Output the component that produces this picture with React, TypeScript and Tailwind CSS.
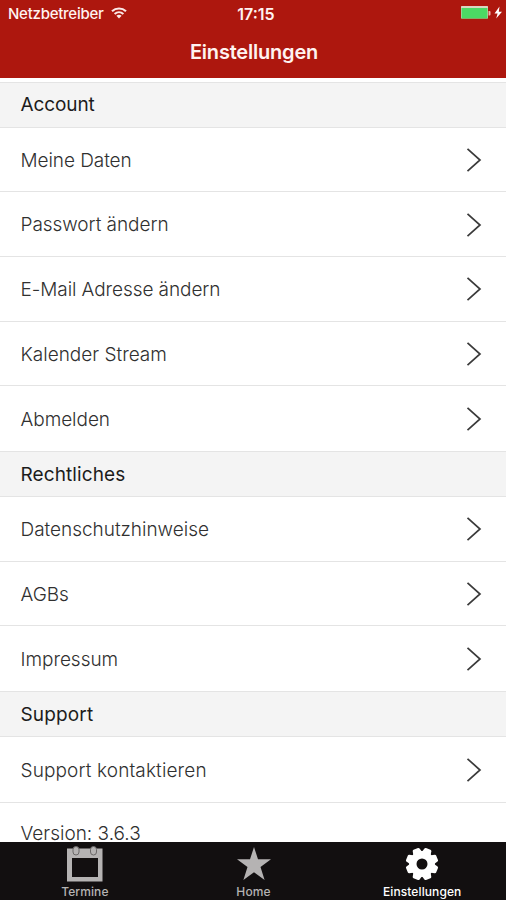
import type { ReactNode } from 'react';

interface Row {
  label: string;
  tracking: string;
}

interface Section {
  title: string;
  tracking: string;
  rows: Row[];
}

const SECTIONS: Section[] = [
  {
    title: 'Account',
    tracking: 'tracking-[-0.1px]',
    rows: [
      { label: 'Meine Daten', tracking: 'tracking-[-0.07px]' },
      { label: 'Passwort ändern', tracking: 'tracking-[-0.05px]' },
      { label: 'E-Mail Adresse ändern', tracking: 'tracking-[-0.08px]' },
      { label: 'Kalender Stream', tracking: 'tracking-[0px]' },
      { label: 'Abmelden', tracking: 'tracking-[-0.05px]' },
    ],
  },
  {
    title: 'Rechtliches',
    tracking: 'tracking-[0.1px]',
    rows: [
      { label: 'Datenschutzhinweise', tracking: 'tracking-[-0.02px]' },
      { label: 'AGBs', tracking: 'tracking-[-0.1px]' },
      { label: 'Impressum', tracking: 'tracking-[-0.03px]' },
    ],
  },
  {
    title: 'Support',
    tracking: 'tracking-[0.15px]',
    rows: [{ label: 'Support kontaktieren', tracking: 'tracking-[0.13px]' }],
  },
];

const GEAR_TEETH = [22.5, 67.5, 112.5, 157.5, 202.5, 247.5, 292.5, 337.5];

function WifiIcon() {
  return (
    <svg width="16" height="12" viewBox="0 0 16 12" fill="none" stroke="#fbe9e7" className="mb-[2px] ml-[7px]">
      <path d="M1 4.2C5 .6 11 .6 15 4.2" strokeWidth="2.2" />
      <path d="M3.6 7C6.2 4.7 9.8 4.7 12.4 7" strokeWidth="2" />
      <path d="M5.4 8.8C7 7.4 9 7.4 10.6 8.800L8 11.6Z" fill="#fbe9e7" stroke="none" />
    </svg>
  );
}

function BatteryIcon() {
  return (
    <svg width="42" height="15" viewBox="0 0 42 15">
      <rect x="0" y="0" width="27" height="12.5" rx="0.5" fill="#d9d5c0" />
      <rect x="0.500" y="2" width="26" height="10.500" fill="#4cd964" />
      <path d="M27.500 5H28.500Q29.500 5 29.500 6V8.500Q29.500 9.500 28.500 9.500H27.500Z" fill="#f0b5ae" />
      <path d="M38.500 0.500L33.500 7.500H36.600L35.200 12.600L41 5.700H37.800Z" fill="#fff" />
    </svg>
  );
}

function Chevron() {
  return (
    <svg width="16" height="26" viewBox="0 0 16 26" fill="none" stroke="#3a3a3a" strokeWidth="1.7" className="mt-[1px] mr-[24px]">
      <path d="M1.500 1.800L14 13L1.500 24.200" />
    </svg>
  );
}

function CalendarIcon() {
  return (
    <svg width="36" height="36" viewBox="0 0 36 36" className="ml-[1px]">
      <path d="M0 2.500H35.500V35.500H0ZM5 12V31H31V12Z" fill="#b5b3b3" fillRule="evenodd" />
      <rect x="6" y="0.500" width="6" height="8.500" rx="3" fill="#b5b3b3" stroke="#6b6868" strokeWidth="1" />
      <rect x="23.500" y="0.500" width="6" height="8.500" rx="3" fill="#b5b3b3" stroke="#6b6868" strokeWidth="1" />
    </svg>
  );
}

function StarIcon() {
  return (
    <svg width="36" height="36" viewBox="0 0 36 36" className="ml-[1px]">
      <path d="M18 1L22 13.300H35L24.500 21L28.600 34L18 26.200L7.400 34L11.500 21L1 13.300H14Z" fill="#b5b3b3" />
    </svg>
  );
}

function GearIcon() {
  return (
    <svg width="36" height="36" viewBox="0 0 36 36" className="ml-[1px]">
      {GEAR_TEETH.map((angle) => (
        <path
          key={angle}
          d="M13 8L14.300 2.700Q14.600 1.700 15.600 1.700H20.400Q21.400 1.700 21.700 2.700L23 8Z"
          fill="#fff"
          transform={`rotate(${angle} 18 18)`}
        />
      ))}
      <circle cx="18" cy="18" r="9.200" fill="none" stroke="#fff" strokeWidth="7.400" />
    </svg>
  );
}

function Tab({ icon, label, className }: { icon: ReactNode; label: string; className: string }) {
  return (
    <div className={`flex flex-1 flex-col items-center pt-1 ${className}`}>
      {icon}
      <span className="mt-[2px] ml-[1px] text-[12px] leading-[16px] font-medium tracking-[0.1px]">{label}</span>
    </div>
  );
}

export default function App() {
  return (
    <div className="flex h-[900px] w-[506px] flex-col overflow-hidden bg-white font-['Inter',sans-serif] text-[#1c1c1c]">
      <header className="h-[78px] shrink-0 bg-[#ad170e] text-[#fff3f1]">
        <div className="grid h-[27px] grid-cols-3 items-center leading-[20px]">
          <div className="flex items-center pl-[8px]">
            <span className="text-[15px] font-medium tracking-[-0.25px]">Netzbetreiber</span>
            <WifiIcon />
          </div>
          <span className="pl-[6px] text-center text-[16px] font-semibold">17:15</span>
          <div className="flex justify-end pr-[3px]">
            <BatteryIcon />
          </div>
        </div>
        <h1 className="mt-[11px] pl-[2px] text-center text-[20px] leading-[28px] font-semibold tracking-[-0.2px]">
          Einstellungen
        </h1>
      </header>

      <main className="min-h-0 flex-1 overflow-hidden pt-[3.5px]">
        {SECTIONS.map((section) => (
          <section key={section.title}>
            <h2
              className={`flex h-[46px] items-center border-y border-[#e4e4e4] bg-[#f4f4f4] pt-[2px] pl-[20.5px] text-[19px] ${section.tracking}`}
            >
              {section.title}
            </h2>
            {section.rows.map((row) => (
              <div
                key={row.label}
                className="flex h-[64.7px] items-center justify-between border-b border-[#e4e4e4] pl-[20.5px] last:border-b-0"
              >
                <span className={`pt-[3px] text-[19px] font-light text-[#303030] ${row.tracking}`}>{row.label}</span>
                <Chevron />
              </div>
            ))}
          </section>
        ))}
        <div className="flex h-[64.7px] items-center border-t border-[#e4e4e4] pl-[20.5px] text-[19px] font-light text-[#303030]">
          Version: 3.6.3
        </div>
      </main>

      <nav className="flex h-[58px] shrink-0 bg-[#120f10]">
        <Tab icon={<CalendarIcon />} label="Termine" className="text-[#b5b3b3]" />
        <Tab icon={<StarIcon />} label="Home" className="text-[#b5b3b3]" />
        <Tab icon={<GearIcon />} label="Einstellungen" className="text-white" />
      </nav>
    </div>
  );
}
